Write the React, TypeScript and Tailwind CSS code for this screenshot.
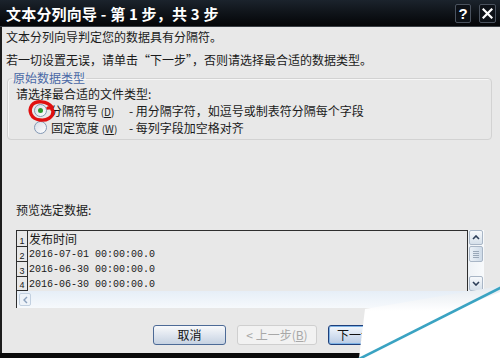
import React from "react"

// Excel "Text to Columns" wizard, step 1 of 3 (Vista basic frame)

const rows = [
  { n: "1", text: "发布时间", cjk: true, h: "h-[16px]" },
  { n: "2", text: "2016-07-01 00:00:00.0", cjk: false, h: "h-[15px]" },
  { n: "3", text: "2016-06-30 00:00:00.0", cjk: false, h: "h-[15px]" },
  { n: "4", text: "2016-06-30 00:00:00.0", cjk: false, h: "h-[14px]" },
]

function Radio({ checked }: { checked?: boolean }) {
  return (
    <span className="w-[13px] h-[13px] rounded-full border border-[#8398b4] bg-gradient-to-br from-[#d7dde6] to-white flex items-center justify-center shrink-0">
      {checked && <span className="w-[5px] h-[5px] rounded-full bg-[#2a9a2e]" />}
    </span>
  )
}

function Btn({ children, w, variant }: { children: React.ReactNode; w: string; variant?: "default" | "disabled" }) {
  const base = "h-[20px] rounded-[3px] flex items-center justify-center text-[12px] leading-none"
  if (variant === "disabled")
    return <div className={`${base} ${w} border border-[#cfcfcf] bg-[#f2f2f2] text-[#a8a8a8]`}>{children}</div>
  if (variant === "default")
    return <div className={`${base} ${w} border border-[#1f3f7a] bg-gradient-to-b from-[#f4f8fc] to-[#b9cbe4] text-[#111] shadow-[inset_0_0_0_1px_#7fb3e6]`}>{children}</div>
  return <div className={`${base} ${w} border border-[#4c6a96] bg-gradient-to-b from-[#f8f9fb] to-[#c6d2e2] text-[#111]`}>{children}</div>
}

export default function App() {
  return (
    <div className="relative w-[500px] h-[358px] overflow-hidden flex flex-col bg-[#e8e8e8] text-[#1a1a1a] font-['Noto_Sans_CJK_SC',sans-serif]">

      {/* Title bar */}
      <div className="h-[27px] flex items-center justify-between pl-[6px] pr-[4px] bg-gradient-to-b from-[#1b232c] to-[#050608] border-b border-[#3a3f45]">
        <span className="text-white font-bold text-[15px] leading-none tracking-[0.2px]">文本分列向导 - 第 1 步，共 3 步</span>
        <div className="flex gap-[8px] items-center">
          <div className="w-[16px] h-[19px] rounded-[2px] border border-[#4a525e] bg-[#0d1117] flex items-center justify-center text-white font-bold text-[15px] leading-none font-['Liberation_Sans',sans-serif]">?</div>
          <div className="w-[17px] h-[19px] rounded-[2px] border border-[#4a525e] bg-[#0d1117] flex items-center justify-center">
            <svg width="11" height="11" viewBox="0 0 11 11">
              <path d="M1.5 1.5 L9.5 9.5 M9.5 1.5 L1.5 9.5" stroke="white" strokeWidth="2.2" strokeLinecap="square" />
            </svg>
          </div>
        </div>
      </div>

      {/* Body */}
      <div className="flex-1 flex flex-col border-l-[2px] border-[#1c1c1c] pl-[4px] text-[12px]">
        <p className="leading-[20px]">文本分列向导判定您的数据具有分隔符。</p>
        <p className="leading-[20px] mt-[3px]">若一切设置无误，请单击“下一步”，否则请选择最合适的数据类型。</p>

        {/* Group box */}
        <fieldset className="ml-[1px] mt-[1px] w-[485px] border border-[#d2d2d2] rounded-[4px] px-[4px] pb-[3px] shadow-[inset_1px_1px_0_#f7f7f7]">
          <legend className="px-[1px] text-[#4a68a6] leading-[14px]">原始数据类型</legend>
          <div className="pl-[4px] pt-[1px]">
            <p className="leading-[16px]">请选择最合适的文件类型:</p>
            <div className="h-[17px] flex items-center pl-[18px]">
              <Radio checked />
              <span className="w-[82px] pl-[3px]">分隔符号 <span className="text-[10px]">(<u>D</u>)</span></span>
              <span>- 用分隔字符，如逗号或制表符分隔每个字段</span>
            </div>
            <div className="h-[17px] flex items-center pl-[18px]">
              <Radio />
              <span className="w-[82px] pl-[4px]">固定宽度 <span className="text-[10px]">(<u>W</u>)</span></span>
              <span>- 每列字段加空格对齐</span>
            </div>
          </div>
        </fieldset>

        <p className="leading-[16px] mt-[62px] pl-[10px]">预览选定数据:</p>

        {/* Preview */}
        <div className="ml-[10px] mt-[12px] w-[468px] flex flex-col">
          <div className="flex h-[61px]">
            <div className="flex-1 border-t border-l border-r border-[#2e2e2e]">
              {rows.map(r => (
                <div key={r.n} className={`${r.h} flex items-stretch`}>
                  <div className="w-[11px] border-r border-b border-[#2e2e2e] flex items-end justify-center text-[9px] leading-[10px] font-['Liberation_Sans',sans-serif]">{r.n}</div>
                  {r.cjk ? (
                    <span className="pl-[1px] text-[12px] leading-[16px]">{r.text}</span>
                  ) : (
                    <span className="pl-[1px] text-[10px] leading-[15px] font-['Liberation_Mono',monospace] whitespace-pre">{r.text}</span>
                  )}
                </div>
              ))}
            </div>
            {/* Vertical scrollbar */}
            <div className="w-[16px] flex flex-col bg-gradient-to-r from-[#eef2f6] to-[#f8fafc] px-[1px]">
              <div className="h-[15px] rounded-[2px] border border-[#a9b6c6] bg-gradient-to-b from-[#f6f9fc] to-[#d6e0ea] flex items-center justify-center">
                <svg width="8" height="5" viewBox="0 0 8 5"><path d="M1 4 L4 1 L7 4" fill="none" stroke="#2c3e58" strokeWidth="1.6" /></svg>
              </div>
              <div className="h-[16px] mt-[1px] rounded-[2px] border border-[#a9b6c6] bg-gradient-to-r from-[#eaf0f6] to-[#cfdbe8] flex flex-col items-center justify-center gap-[1px]">
                <span className="w-[6px] h-px bg-[#9aa8b8]" />
                <span className="w-[6px] h-px bg-[#9aa8b8]" />
                <span className="w-[6px] h-px bg-[#9aa8b8]" />
                <span className="w-[6px] h-px bg-[#9aa8b8]" />
              </div>
              <div className="flex-1" />
              <div className="h-[15px] rounded-[2px] border border-[#a9b6c6] bg-gradient-to-b from-[#f6f9fc] to-[#d6e0ea] flex items-center justify-center">
                <svg width="8" height="5" viewBox="0 0 8 5"><path d="M1 1 L4 4 L7 1" fill="none" stroke="#2c3e58" strokeWidth="1.6" /></svg>
              </div>
            </div>
          </div>
          {/* Horizontal scrollbar */}
          <div className="h-[17px] flex items-center bg-gradient-to-b from-[#e6eef7] to-[#f6f9fc] border-l border-[#2e2e2e] pl-[2px]">
            <div className="w-[12px] h-[13px] rounded-[2px] border border-[#c2d0e0] bg-[#eef3f9] flex items-center justify-center">
              <svg width="5" height="8" viewBox="0 0 5 8"><path d="M4 1 L1 4 L4 7" fill="none" stroke="#8aa0bc" strokeWidth="1.4" /></svg>
            </div>
          </div>
        </div>

        {/* Buttons */}
        <div className="flex gap-[11px] mt-[17px] pl-[147px]">
          <Btn w="w-[73px]">取消</Btn>
          <Btn w="w-[80px]" variant="disabled">&lt; 上一步(<u>B</u>)</Btn>
          <Btn w="w-[80px]" variant="default">下一步(<u>N</u>) &gt;</Btn>
        </div>
      </div>

      {/* Bottom frame */}
      <div className="h-[5px] bg-[#0a0a0a]" />

      {/* Red hand-drawn mark and page curl overlay */}
      <svg className="absolute inset-0 pointer-events-none" width="500" height="358" viewBox="0 0 500 358">
        <path d="M52 107 C 47 101, 36 100, 32 105 C 28 111, 31 119, 40 120 C 47 121, 53 117, 53 112 C 53 109, 51 107, 48 108"
          fill="none" stroke="#e01010" strokeWidth="3.4" strokeLinecap="round" />
        <defs>
          <linearGradient id="curl" x1="0" y1="0" x2="0" y2="1">
            <stop offset="0" stopColor="#e4eaf0" />
            <stop offset="0.35" stopColor="#ffffff" />
          </linearGradient>
        </defs>
        <polygon points="365,309 500,286 500,358 359,358" fill="url(#curl)" />
        <polygon points="380,340 500,292 500,358 360,358" fill="#ffffff" />
        <line x1="357" y1="360" x2="502" y2="287" stroke="#3aa3c2" strokeWidth="2.6" />
      </svg>
    </div>
  )
}
